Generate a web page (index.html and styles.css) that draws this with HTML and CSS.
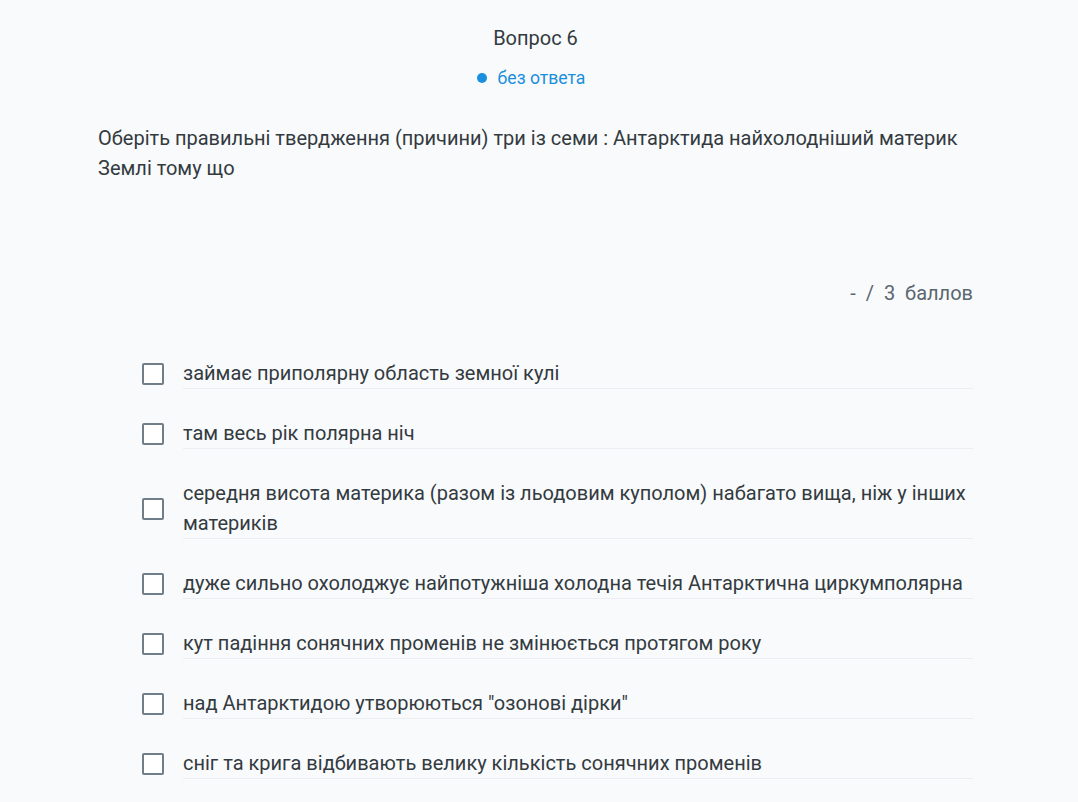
FILE: index.html
```html
<!DOCTYPE html>
<html lang="uk">
<head>
<meta charset="utf-8">
<link rel="stylesheet" href="styles.css">
</head>
<body>
<div class="page">
  <div class="header">
    <div class="title">Вопрос 6</div>
    <div class="status"><span class="dot"></span><span>без ответа</span></div>
  </div>
  <div class="question">Оберіть правильні твердження (причини) три із семи : Антарктида найхолодніший материк Землі тому що</div>
  <div class="score">-&nbsp; /&nbsp; 3&nbsp; баллов</div>
  <div class="options">
    <label class="option"><span class="box"></span><span class="text">займає приполярну область земної кулі</span></label>
    <label class="option"><span class="box"></span><span class="text">там весь рік полярна ніч</span></label>
    <label class="option"><span class="box"></span><span class="text">середня висота материка (разом із льодовим куполом) набагато вища, ніж у інших материків</span></label>
    <label class="option"><span class="box"></span><span class="text">дуже сильно охолоджує найпотужніша холодна течія Антарктична циркумполярна</span></label>
    <label class="option"><span class="box"></span><span class="text">кут падіння сонячних променів не змінюється протягом року</span></label>
    <label class="option"><span class="box"></span><span class="text">над Антарктидою утворюються "озонові дірки"</span></label>
    <label class="option"><span class="box"></span><span class="text">сніг та крига відбивають велику кількість сонячних променів</span></label>
  </div>
</div>
</body>
</html>
```

FILE: styles.css
```css
html, body {
  margin: 0;
  padding: 0;
  background: #f9fafc;
}
body {
  font-family: Roboto, "Noto Sans", sans-serif;
  color: #333a40;
}
.page {
  width: 875px;
  margin: 0 0 0 98px;
  padding-top: 26px;
}
.header {
  display: flex;
  flex-direction: column;
  align-items: center;
}
.title {
  font-size: 20px;
  line-height: 24px;
  color: #333a40;
}
.status {
  margin-top: 18px;
  display: flex;
  align-items: center;
  gap: 11px;
  font-size: 17.6px;
  line-height: 20px;
  color: #1a8fdd;
  margin-left: -9px;
}
.dot {
  width: 10px;
  height: 10px;
  border-radius: 50%;
  background: #1a8fdd;
}
.question {
  margin-top: 35px;
  font-size: 20px;
  line-height: 30px;
  color: #333a40;
}
.score {
  margin-top: 95px;
  text-align: right;
  font-size: 20px;
  line-height: 30px;
  color: #5a6670;
}
.options {
  margin-top: 50px;
  margin-left: 44px;
  display: flex;
  flex-direction: column;
  gap: 29px;
}
.option {
  display: flex;
  align-items: center;
  gap: 19px;
}
.box {
  flex: none;
  width: 18px;
  height: 18px;
  border: 2px solid #6f7e88;
  border-radius: 2px;
  background: #fff;
}
.text {
  flex: 1;
  font-size: 20px;
  line-height: 30px;
  border-bottom: 1px solid #eceef1;
  color: #333a40;
}
```
